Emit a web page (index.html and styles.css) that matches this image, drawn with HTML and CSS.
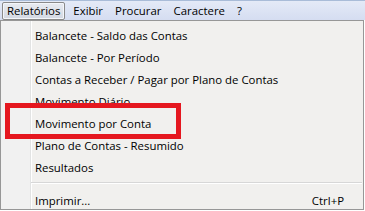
FILE: index.html
```html
<!DOCTYPE html>
<html lang="pt-br">
<head>
    <meta charset="UTF-8">
    <title>Relatórios</title>
    <link rel="stylesheet" href="styles.css">
</head>
<body>
    <nav class="menubar">
        <span class="menubar-item active">Relatórios</span>
        <span class="menubar-item">Exibir</span>
        <span class="menubar-item">Procurar</span>
        <span class="menubar-item">Caractere</span>
        <span class="menubar-item">?</span>
    </nav>

    <div class="dropdown">
        <div class="menu-item">Balancete - Saldo das Contas</div>
        <div class="menu-item">Balancete - Por Período</div>
        <div class="menu-item">Contas a Receber / Pagar por Plano de Contas</div>
        <div class="menu-item">Movimento Diário</div>
        <div class="menu-item">Movimento por Conta</div>
        <div class="menu-item">Plano de Contas - Resumido</div>
        <div class="menu-item">Resultados</div>
        <div class="separator"></div>
        <div class="menu-item"><span>Imprimir...</span><span class="shortcut">Ctrl+P</span></div>

        <div class="highlight"></div>
    </div>
</body>
</html>
```

FILE: styles.css
```css
body {
    margin: 0;
    width: 365px;
    height: 211px;
    overflow: hidden;
    background: #ffffff;
    font-family: "Open Sans", "Noto Sans", sans-serif;
    font-size: 11.4px;
    color: #000;
}
.menubar {
    display: flex;
    align-items: center;
    height: 20px;
    box-sizing: border-box;
    padding-left: 2px;
    border-top: 1px solid #a9bcd8;
    background: linear-gradient(#e4eaf7, #d5ddf1);
}
.menubar-item {
    padding: 0 4px;
    height: 16px;
    line-height: 16px;
    margin-right: 2px;
    border: 1px solid transparent;
    border-radius: 2px;
}
.menubar-item.active {
    margin-right: 3px;
    border-color: #8a8a8a;
    background: linear-gradient(#e8ebf1, #d3d8e2);
    box-shadow: inset 0 0 0 1px #f4f6fa;
}
.dropdown {
    position: relative;
    width: 364px;
    height: 190px;
    box-sizing: border-box;
    border: 1px solid #979797;
    padding-top: 3px;
    background: linear-gradient(to right, #f1f1f1 29px, #e2e3e3 29px, #e2e3e3 30px, #ffffff 30px, #ffffff 31px, #f1f0ee 31px);
}
.menu-item {
    display: flex;
    justify-content: space-between;
    align-items: center;
    height: 22px;
    padding: 0 19px 0 34px;
}
.separator {
    height: 1px;
    margin: 4px 1px 5px 30px;
    background: #d7d7d7;
    border-bottom: 1px solid #ffffff;
}
.highlight {
    position: absolute;
    left: 4px;
    top: 82px;
    width: 176px;
    height: 36px;
    box-sizing: border-box;
    border: 5px solid #e5171f;
}
```
